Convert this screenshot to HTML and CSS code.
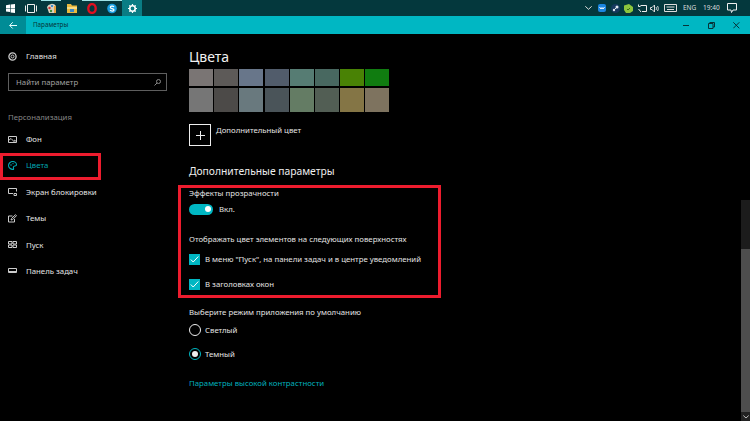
FILE: index.html
```html
<!DOCTYPE html>
<html lang="ru">
<head>
<meta charset="utf-8">
<title>Параметры</title>
<link rel="stylesheet" href="styles.css">
</head>
<body>
<div class="screen">
  <header class="taskbar">
    <div class="tasks">
      <span class="task task-start"><svg width="9" height="9" viewBox="0 0 9 9"><path fill="#fff" d="M0 1.200 4 .6V4H0zM4.600.5 9 0v4H4.600zM0 4.600h4V8L0 7.500zM4.600 4.600H9V9l-4.400-.6z"/></svg></span>
      <span class="task task-view"><svg width="12" height="9" viewBox="0 0 12 9"><path fill="none" stroke="#eee" d="M2.500.5h7v8h-7zM.5 1.500v6M11.500 1.500v6"/></svg></span>
      <span class="task task-paint is-open"><svg width="11" height="11" viewBox="0 0 11 11"><path fill="#d9d2c0" d="M1 4a5 4.500 0 0 1 9-1l-1 7H3z"/><circle cx="3.500" cy="5" r="1.200" fill="#d13438"/><circle cx="6" cy="3" r="1.100" fill="#1e7fd0"/><circle cx="5" cy="8" r="1.200" fill="#3a8f3a"/><path fill="#e8a33c" d="M8 3h2v7H8z"/></svg></span>
      <span class="task task-folder"><svg width="10" height="9" viewBox="0 0 10 9"><path fill="#e8b93e" d="M0 0h4l1 1.500h5V9H0z"/><path fill="#f7dc83" d="M0 3h10v2H0z"/><path fill="#3b87c4" d="M3 5h4v3H3z"/></svg></span>
      <span class="task task-opera is-open"><svg width="10" height="11" viewBox="0 0 10 11"><ellipse cx="5" cy="5.500" rx="3.700" ry="4.400" fill="none" stroke="#e01020" stroke-width="2.400"/></svg></span>
      <span class="task task-skype is-open"><svg width="10" height="11" viewBox="0 0 10 11"><circle cx="5" cy="5.500" r="4.800" fill="#1a9fe0"/><path fill="none" stroke="#fff" stroke-width="1.200" d="M7 3.800C6 2.800 3.300 3 3.300 4.400S7 5.500 7 7 4 8.300 3 7.200"/></svg></span>
      <span class="task task-settings"><svg width="9" height="9" viewBox="0 0 9 9"><circle cx="4.500" cy="4.500" r="2.700" fill="none" stroke="#fff" stroke-width="1.600"/><path stroke="#fff" stroke-width="1.200" d="M4.500 0v1.500M4.500 7.500V9M0 4.500h1.500M7.500 4.500H9M1.300 1.300l1 1M6.700 6.700l1 1M1.300 7.700l1-1M6.700 2.300l1-1"/></svg></span>
    </div>
    <div class="tray">
      <svg class="tray-chevron" width="7" height="4" viewBox="0 0 7 4"><path fill="none" stroke="#ddd" d="M.3.300 3.500 3.300 6.700.3"/></svg>
      <svg class="tray-vk" width="8" height="8" viewBox="0 0 8 8"><rect width="8" height="8" rx="2" fill="#1b86e0"/><path fill="none" stroke="#fff" d="M1.500 3 3 5l1-1.500L5 5l1.500-2"/></svg>
      <svg class="tray-steam" width="9" height="9" viewBox="0 0 9 9"><circle cx="4.500" cy="4.500" r="4.500" fill="#16395e"/><circle cx="6" cy="3" r="1.500" fill="#dfe7ee"/><circle cx="3" cy="6" r="1.200" fill="#dfe7ee"/><path stroke="#dfe7ee" d="M3 6l3-3"/></svg>
      <svg class="tray-leaf" width="9" height="9" viewBox="0 0 9 9"><path fill="#8cc63e" d="M0 1.500 5 0l4 3v4L6 9H2L0 6z"/><path stroke="#3c6e10" fill="none" d="M3 5l1 1 2-2"/></svg>
      <svg class="tray-net" width="9" height="9" viewBox="0 0 9 9"><path fill="none" stroke="#eee" d="M2.500 1.500H8.500V7.500H4M.5.500v2h2M.5 5l2.500 3"/></svg>
      <svg class="tray-vol" width="9" height="9" viewBox="0 0 9 9"><path fill="none" stroke="#ddd" d="M.5 3.500h1.500L4.500 1v7L2 5.500H.5zM6 3c.6 1 .6 2 0 3M7.500 2c1 1.500 1 3.500 0 5"/></svg>
      <svg class="tray-kbd" width="13" height="8" viewBox="0 0 13 8"><path fill="none" stroke="#ddd" d="M.5.500h12v7H.5zM3 5.500h7M2.500 3h8"/></svg>
      <span class="tray-lang">ENG</span>
      <span class="tray-clock">19:40</span>
      <svg class="tray-note" width="10" height="10" viewBox="0 0 10 10"><path fill="none" stroke="#eee" d="M.5.500h9v6.500H6L4.500 9.500 4 7H.5z"/></svg>
    </div>
  </header>

  <div class="titlebar">
    <span class="back"><svg width="8" height="7" viewBox="0 0 8 7"><path fill="none" stroke="#e8ffff" d="M3.700.300.700 3.500l3 3M.7 3.500H8"/></svg></span>
    <span class="title">Параметры</span>
    <div class="controls">
      <svg width="7" height="7" viewBox="0 0 7 7"><path stroke="#063338" d="M0 3.500h6"/></svg>
      <svg width="7" height="7" viewBox="0 0 7 7"><path fill="none" stroke="#063338" d="M.5 1.500h4.500v5H.5zM1.800 1.500V.5h4.700v4.500H5"/></svg>
      <svg width="7" height="7" viewBox="0 0 7 7"><path stroke="#063338" d="M.3.300l6 6M6.300.3l-6 6"/></svg>
    </div>
  </div>

  <div class="window">
    <nav class="sidebar">
      <div class="nav-item home">
        <svg class="nav-icon" viewBox="0 0 9 9"><circle cx="4.500" cy="4.500" r="3.600" fill="none" stroke="#ccc" stroke-width="1.300"/><circle cx="4.500" cy="4.500" r="1.500" fill="none" stroke="#ccc"/></svg>
        <span>Главная</span>
      </div>
      <div class="search">
        <span>Найти параметр</span>
        <svg width="7" height="7" viewBox="0 0 7 7"><circle cx="4.500" cy="2.500" r="2" fill="none" stroke="#888"/><path stroke="#888" d="M3 4 .5 6.500"/></svg>
      </div>
      <div class="group-label">Персонализация</div>
      <div class="nav-item">
        <svg class="nav-icon" viewBox="0 0 9 9"><path fill="none" stroke="#ccc" d="M.5 1.500h8v6h-8zM.5 5.500 3 3.500l4 4M6 5l2.500 1.500"/></svg>
        <span>Фон</span>
      </div>
      <div class="nav-item is-active">
        <svg class="nav-icon" viewBox="0 0 9 9"><path fill="none" stroke="#00a5b0" stroke-width="1.100" d="M5.500 8.500C2.500 8.500.5 6.500.5 4.500S2.500.5 4.500.5s4 1.500 4 3.300c0 1.500-2.500 1-3 2-.4.900.5 1.700 0 2.700z"/><circle cx="3" cy="4" r=".8" fill="#00a5b0"/><circle cx="5" cy="2.600" r=".7" fill="#00a5b0"/></svg>
        <span>Цвета</span>
      </div>
      <div class="nav-item">
        <svg class="nav-icon" viewBox="0 0 9 9"><path fill="none" stroke="#ccc" d="M5 6.500H.5v-5h8v3M6 6.500h2.500v2H6z"/></svg>
        <span>Экран блокировки</span>
      </div>
      <div class="nav-item">
        <svg class="nav-icon" viewBox="0 0 9 9"><path fill="none" stroke="#ccc" d="M4.500 2H.5v6h6V5M3 6l.5-1.500L7.500.7l1 1-4 4z"/></svg>
        <span>Темы</span>
      </div>
      <div class="nav-item">
        <svg class="nav-icon" viewBox="0 0 9 9"><path fill="none" stroke="#ccc" d="M.5 1.500h3.500v2.500H.5zM5 1.500h3.500v2.500H5zM.5 5h3.500v2.500H.5zM5 5h3.500v2.500H5z"/></svg>
        <span>Пуск</span>
      </div>
      <div class="nav-item">
        <svg class="nav-icon" viewBox="0 0 9 9"><path fill="none" stroke="#ccc" d="M.5 2.500h8v4h-8z"/><path stroke="#ccc" d="M.5 5.500h8"/></svg>
        <span>Панель задач</span>
      </div>
    </nav>

    <main class="content">
      <h1>Цвета</h1>
      <div class="swatches">
        <i class="sw c1"></i><i class="sw c2"></i><i class="sw c3"></i><i class="sw c4"></i><i class="sw c5"></i><i class="sw c6"></i><i class="sw c7"></i><i class="sw c8"></i>
        <i class="sw tall c9"></i><i class="sw tall c10"></i><i class="sw tall c11"></i><i class="sw tall c12"></i><i class="sw tall c13"></i><i class="sw tall c14"></i><i class="sw tall c15"></i><i class="sw tall c16"></i>
      </div>
      <div class="add-color">
        <span class="plus"><svg width="9" height="9" viewBox="0 0 9 9"><path stroke="#eee" d="M4.500 0v9M0 4.500h9"/></svg></span>
        <span>Дополнительный цвет</span>
      </div>
      <h2>Дополнительные параметры</h2>
      <p class="label first">Эффекты прозрачности</p>
      <div class="toggle-row">
        <span class="toggle"><i></i></span>
        <span>Вкл.</span>
      </div>
      <p class="label surfaces">Отображать цвет элементов на следующих поверхностях</p>
      <div class="check-row">
        <span class="check"><svg width="11" height="11" viewBox="0 0 11 11"><path fill="none" stroke="#fff" d="M1.800 5.500 4.200 8 9.300 2.500"/></svg></span>
        <span>В меню "Пуск", на панели задач и в центре уведомлений</span>
      </div>
      <div class="check-row second">
        <span class="check"><svg width="11" height="11" viewBox="0 0 11 11"><path fill="none" stroke="#fff" d="M1.800 5.500 4.200 8 9.300 2.500"/></svg></span>
        <span>В заголовках окон</span>
      </div>
      <p class="label mode">Выберите режим приложения по умолчанию</p>
      <div class="radio-row">
        <span class="radio"></span>
        <span>Светлый</span>
      </div>
      <div class="radio-row second">
        <span class="radio is-on"><i></i></span>
        <span>Темный</span>
      </div>
      <a class="link">Параметры высокой контрастности</a>
    </main>
  </div>

  <div class="highlight hl-nav"></div>
  <div class="highlight hl-options"></div>
  <div class="scrollbar"><div class="thumb"></div><div class="arrow"><svg width="6" height="4" viewBox="0 0 6 4"><path fill="none" stroke="#bbb" d="M.3.500 3 3 5.700.5"/></svg></div></div>
</div>
</body>
</html>
```
FILE: styles.css
```css
* { box-sizing: border-box; }
html, body { margin: 0; padding: 0; background: #000; }
body { font-family: "Noto Sans", "Open Sans", sans-serif; color: #e4e4e4; font-size: 7.800px; line-height: 12px; }
.screen { position: relative; width: 750px; height: 421px; overflow: hidden; background: #000; display: flex; flex-direction: column; }

.taskbar { height: 16px; flex: none; background: #04383d; display: flex; justify-content: space-between; }
.tasks { display: flex; }
.task { position: relative; height: 16px; display: flex; align-items: center; justify-content: center; }
.task.is-open::before { content: ""; position: absolute; top: 0; left: 0; right: 0; height: 1px; background: #9fe3e6; }
.task-start { width: 20px; }
.task-view { width: 21px; }
.task-paint { width: 20px; }
.task-folder { width: 21px; }
.task-opera { width: 20px; }
.task-skype { width: 20px; }
.task-settings { width: 20px; background: #0a7c84; }
.tray { display: flex; align-items: center; padding-right: 13px; color: #ddd; font-size: 6.500px; }
.tray svg { flex: none; }
.tray-chevron { margin-right: 6px; }
.tray-vk { margin-right: 5px; }
.tray-steam { margin-right: 4px; }
.tray-leaf { margin-right: 5px; }
.tray-net { margin-right: 3px; }
.tray-vol { margin-right: 5px; }
.tray-kbd { margin-right: 6px; }
.tray-lang { width: 20px; }
.tray-clock { width: 24px; }

.titlebar { height: 18px; flex: none; background: #00b7c3; display: flex; align-items: center; color: #063338; font-size: 6.300px; }
.back { width: 26px; height: 18px; background: #008c96; display: flex; align-items: center; justify-content: center; }
.title { margin-left: 7px; }
.controls { margin-left: auto; display: flex; gap: 18px; padding-right: 10px; }

.window { flex: 1; display: flex; min-height: 0; }
.sidebar { width: 189px; flex: none; padding: 16px 0 0 8px; }
.nav-item { display: flex; align-items: center; height: 12px; margin-bottom: 14.400px; }
.nav-icon { width: 9px; height: 9px; margin-right: 9px; flex: none; }
.is-active { color: #00a5b0; }
.home { margin-bottom: 0; }
.search { width: 159px; height: 18px; margin-top: 11px; border: 1px solid #5e5e5e; display: flex; align-items: center; justify-content: space-between; padding: 0 5px 0 7px; color: #a0a0a0; }
.group-label { margin-top: 20px; margin-bottom: 10px; color: #858585; }

.content { flex: 1; padding-top: 11px; }
h1 { margin: 0; font-size: 14px; line-height: 24px; font-weight: 400; color: #f0f0f0; }
.swatches { display: grid; grid-template-columns: repeat(8, 24px); column-gap: 1.200px; row-gap: 2px; width: 201px; }
.sw { display: block; height: 17px; }
.tall { height: 24px; }
.c1 { background: #7a7574; } .c2 { background: #5d5a58; } .c3 { background: #68768a; } .c4 { background: #515c6b; }
.c5 { background: #567c73; } .c6 { background: #486860; } .c7 { background: #498205; } .c8 { background: #107c10; }
.c9 { background: #767676; } .c10 { background: #4c4a48; } .c11 { background: #69797e; } .c12 { background: #4a5459; }
.c13 { background: #647c64; } .c14 { background: #525e54; } .c15 { background: #847545; } .c16 { background: #7e735f; }
.add-color { display: flex; align-items: flex-start; gap: 5px; margin-top: 12px; }
.plus { width: 22px; height: 22px; border: 1px solid #eee; display: flex; align-items: center; justify-content: center; flex: none; }
h2 { margin: 16px 0 0; font-size: 10.300px; line-height: 18px; font-weight: 400; color: #eee; }
.label { margin: 0; height: 12px; }
.first { margin-top: 7px; }
.toggle-row { display: flex; align-items: center; gap: 6px; margin-top: 4px; height: 12px; }
.toggle { width: 24px; height: 11px; border-radius: 6px; background: #00b7c3; display: flex; align-items: center; justify-content: flex-end; padding-right: 2.500px; }
.toggle i { width: 6px; height: 6px; border-radius: 50%; background: #fff; display: block; }
.surfaces { margin-top: 18px; }
.check-row { display: flex; align-items: center; gap: 5px; margin-top: 8px; height: 12px; }
.check-row.second { margin-top: 13px; }
.check { width: 11px; height: 11px; background: #00b7c3; flex: none; display: block; }
.check svg { display: block; }
.mode { margin-top: 16px; }
.radio-row { display: flex; align-items: center; gap: 4px; margin-top: 6px; height: 12px; }
.radio-row.second { margin-top: 12px; }
.radio { width: 12px; height: 12px; border: 1px solid #eee; border-radius: 50%; flex: none; display: flex; align-items: center; justify-content: center; }
.radio.is-on { border: 1.500px solid #00b7c3; }
.radio i { width: 6px; height: 6px; border-radius: 50%; background: #eee; display: block; }
.link { display: block; margin-top: 17px; color: #00b0bc; }

.highlight { position: absolute; border: 3px solid #ed1c2e; pointer-events: none; }
.hl-nav { left: 0; top: 153px; width: 101px; height: 27px; }
.hl-options { left: 178px; top: 185px; width: 263px; height: 113px; }
.scrollbar { position: absolute; left: 741px; top: 200px; width: 9px; height: 221px; background: #1c1c1c; display: flex; flex-direction: column; }
.thumb { margin-top: 49px; height: 163px; background: #4d4d4d; }
.arrow { height: 9px; background: #222; display: flex; align-items: center; justify-content: center; }
```
